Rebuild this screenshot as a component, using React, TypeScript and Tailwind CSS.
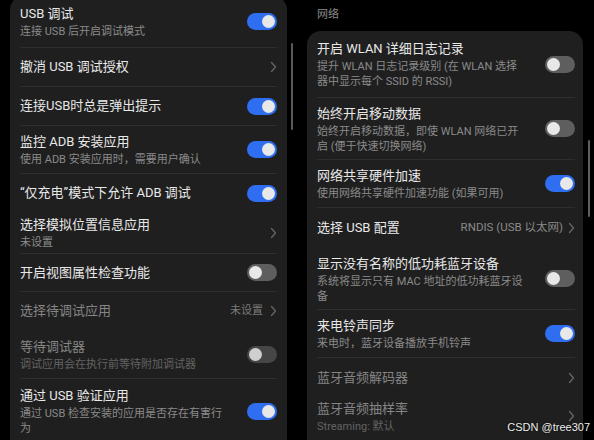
import React from "react";

type ToggleProps = { on?: boolean; dim?: boolean };

function Toggle({ on, dim }: ToggleProps) {
  const track = on
    ? "bg-[#2f6ef0] justify-end"
    : dim
    ? "bg-[#464646] justify-start"
    : "bg-[#5e5e5e] justify-start";
  const knob = dim ? "bg-[#cfcfcf]" : "bg-[#e8e8e8]";
  return (
    <div className={`w-[30px] h-[17px] rounded-full flex items-center px-[2px] shrink-0 ${track}`}>
      <div className={`w-[13px] h-[13px] rounded-full ${knob}`} />
    </div>
  );
}

function Chevron() {
  return (
    <svg width="7" height="12" viewBox="0 0 7 12" className="shrink-0">
      <polyline points="1.5,1.5 5.5,6 1.5,10.5" fill="none" stroke="#666666" strokeWidth="1.3" strokeLinecap="round" strokeLinejoin="round" />
    </svg>
  );
}

type RowProps = {
  h: string;
  title: string;
  subs?: string[];
  dim?: boolean;
  right?: React.ReactNode;
};

function Row({ h, title, subs, dim, right }: RowProps) {
  return (
    <div className={`flex items-center justify-between shrink-0 ${h}`}>
      <div className="flex flex-col whitespace-nowrap">
        <div className={`text-[13px] leading-[20px] ${dim ? "text-[#858585]" : "text-[#e8e8e8]"}`}>{title}</div>
        {subs?.map((s, i) => (
          <div key={i} className={`text-[11px] leading-[15px] ${dim ? "text-[#636363]" : "text-[#8a8a8a]"}`}>
            {s}
          </div>
        ))}
      </div>
      {right}
    </div>
  );
}

function Divider() {
  return <div className="h-px bg-[#2e2e2e] shrink-0" />;
}

export default function App() {
  return (
    <div className="relative w-[594px] h-[440px] bg-black overflow-hidden flex items-start font-['Roboto','Noto_Sans_CJK_SC',sans-serif]">
      {/* Left panel */}
      <div className="pl-[10px] shrink-0">
        <div className="w-[277px] mt-[-4px] bg-[#1f1f1f] rounded-[14px] px-[10px] pb-[40px]">
          <Row h="h-[51px]" title="USB 调试" subs={["连接 USB 后开启调试模式"]} right={<Toggle on />} />
          <Divider />
          <Row h="h-[38px]" title="撤消 USB 调试授权" right={<Chevron />} />
          <Divider />
          <Row h="h-[38px]" title="连接USB时总是弹出提示" right={<Toggle on />} />
          <Divider />
          <Row h="h-[47px]" title="监控 ADB 安装应用" subs={["使用 ADB 安装应用时，需要用户确认"]} right={<Toggle on />} />
          <Divider />
          <Row h="h-[38px]" title="“仅充电”模式下允许 ADB 调试" right={<Toggle on />} />
          <Row h="h-[41px]" title="选择模拟位置信息应用" subs={["未设置"]} right={<Chevron />} />
          <Divider />
          <Row h="h-[37px]" title="开启视图属性检查功能" right={<Toggle />} />
          <Divider />
          <Row
            h="h-[38px]"
            title="选择待调试应用"
            dim
            right={
              <div className="flex items-center gap-[7px]">
                <span className="text-[11px] text-[#7a7a7a]">未设置</span>
                <Chevron />
              </div>
            }
          />
          <Row h="h-[48px]" title="等待调试器" dim subs={["调试应用会在执行前等待附加调试器"]} right={<Toggle dim />} />
          <Divider />
          <Row
            h="h-[64px]"
            title="通过 USB 验证应用"
            subs={["通过 USB 检查安装的应用是否存在有害行", "为"]}
            right={<Toggle on />}
          />
        </div>
      </div>

      {/* Middle scrollbar strip */}
      <div className="w-[20px] shrink-0">
        <div className="ml-[4px] mt-[43px] w-[2px] h-[87px] rounded-full bg-[#5a5a5a]" />
      </div>

      {/* Right panel */}
      <div className="w-[276px] shrink-0 flex flex-col">
        <div className="h-[31px] shrink-0 flex items-center pl-[10px] text-[11px] text-[#8a8a8a]">网络</div>
        <div className="bg-[#1f1f1f] rounded-[14px] pl-[10px] pr-[8px] pb-[40px] shrink-0">
          <Row
            h="h-[66px]"
            title="开启 WLAN 详细日志记录"
            subs={["提升 WLAN 日志记录级别 (在 WLAN 选择", "器中显示每个 SSID 的 RSSI)"]}
            right={<Toggle />}
          />
          <Divider />
          <Row
            h="h-[61px]"
            title="始终开启移动数据"
            subs={["始终开启移动数据，即使 WLAN 网络已开", "启 (便于快速切换网络)"]}
            right={<Toggle />}
          />
          <Divider />
          <Row h="h-[47px]" title="网络共享硬件加速" subs={["使用网络共享硬件加速功能 (如果可用)"]} right={<Toggle on />} />
          <Divider />
          <Row
            h="h-[40px]"
            title="选择 USB 配置"
            right={
              <div className="flex items-center gap-[5px]">
                <span className="text-[11.5px] text-[#8a8a8a]">RNDIS (USB 以太网)</span>
                <Chevron />
              </div>
            }
          />
          <Row
            h="h-[61px]"
            title="显示没有名称的低功耗蓝牙设备"
            subs={["系统将显示只有 MAC 地址的低功耗蓝牙设", "备"]}
            right={<Toggle />}
          />
          <Divider />
          <Row h="h-[47px]" title="来电铃声同步" subs={["来电时，蓝牙设备播放手机铃声"]} right={<Toggle on />} />
          <Divider />
          <Row h="h-[40px]" title="蓝牙音频解码器" dim right={<Chevron />} />
          <Row h="h-[36px]" title="蓝牙音频抽样率" dim subs={["Streaming: 默认"]} right={<Chevron />} />
        </div>
      </div>

      {/* Right scrollbar strip */}
      <div className="w-[11px] shrink-0">
        <div className="ml-[5px] mt-[140px] w-[2px] h-[77px] rounded-full bg-[#606060]" />
      </div>

      <div className="absolute right-[4px] bottom-[6px] text-[11px] leading-[14px] text-[#eeeeee] font-['Liberation_Sans',sans-serif] [text-shadow:0_0_2px_#000]">
        CSDN @tree307
      </div>
    </div>
  );
}
